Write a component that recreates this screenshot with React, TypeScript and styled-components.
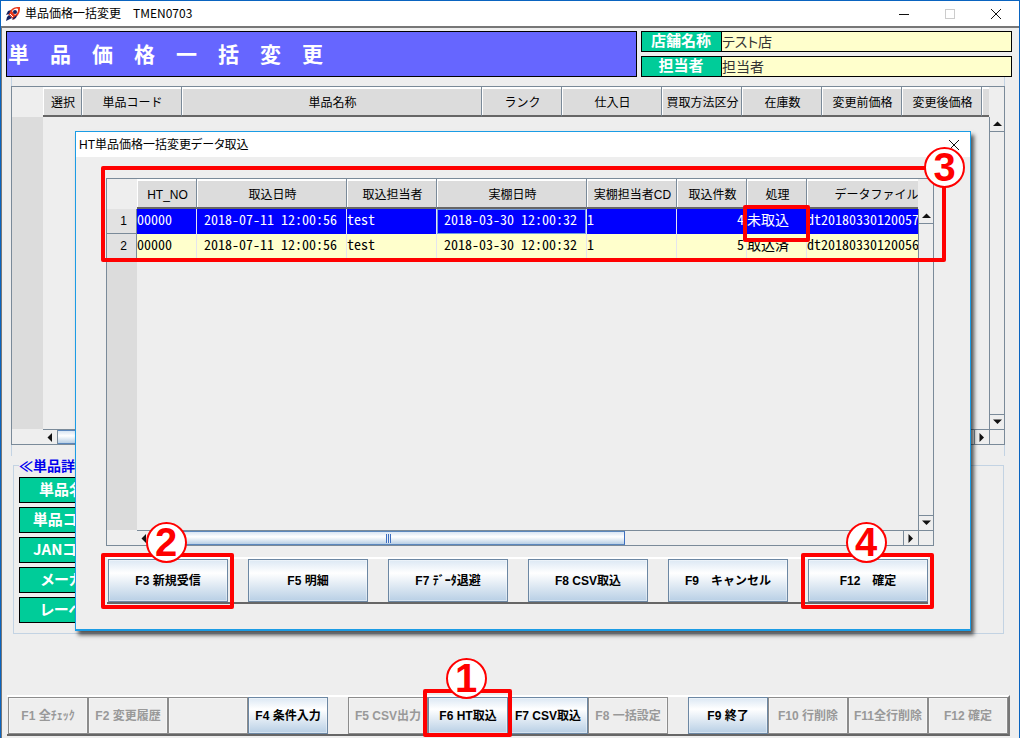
import React from 'react';
import styled, { createGlobalStyle, css } from 'styled-components';

const ui = '"Liberation Sans", "Noto Sans CJK JP", sans-serif';
const cjk = '"Noto Sans CJK JP", "Liberation Sans", sans-serif';
const mono = '"Noto Sans Mono CJK JP", "Liberation Mono", "Noto Sans CJK JP", monospace';

const line = '#7a8a99';
const panel = '#eeeeee';
const headerFill = '#dcdcdc';
const green = '#00cc99';
const cream = '#ffffcc';

const GlobalStyle = createGlobalStyle`
  *, *::before, *::after { box-sizing: border-box; }
  body { margin: 0; background: ${panel}; font-family: ${ui}; font-size: 12px; color: #000; }
  button, input { font: inherit; color: inherit; margin: 0; padding: 0; border-radius: 0; }
`;

const Window = styled.div`
  position: relative;
  display: flex;
  flex-direction: column;
  min-height: 100vh;
  border: 1px solid #0a64c0;
  background: ${panel};
`;

const TitleBar = styled.header`
  display: flex;
  align-items: center;
  height: 25px;
  padding-left: 4px;
  background: #fff;
  font-family: ${cjk};
`;

const WindowTitle = styled.h1`
  flex: 1;
  margin: 0 0 2px 4px;
  font-size: 12px;
  font-weight: 400;
  line-height: 20px;
`;

const CaptionButton = styled.button`
  display: flex;
  align-items: center;
  justify-content: center;
  width: 46px;
  height: 24px;
  border: 0;
  background: transparent;
`;

const Client = styled.main`
  flex: 1;
  display: flex;
  flex-direction: column;
  padding: 3px 7px 2px 3px;
  border-top: 2px solid #777;
  border-left: 1px solid #777;
`;

const TopRow = styled.div`
  display: grid;
  grid-template-columns: 631fr 371fr;
  gap: 4px;
  margin-left: 1px;
`;

const Banner = styled.h2`
  margin: 0;
  padding-left: 1px;
  border: 1px solid #000;
  background: #6666ff;
  color: #fff;
  font-family: ${cjk};
  font-size: 21px;
  font-weight: 700;
  line-height: 42px;
`;

const InfoList = styled.div`
  display: grid;
  gap: 4px;
`;

const InfoRow = styled.label`
  display: flex;
  height: 21px;
  border: 1px solid #000;
  background: ${cream};
`;

const InfoName = styled.span`
  flex: none;
  width: 80px;
  padding-right: 1px;
  border-right: 1px solid #000;
  background: ${green};
  color: #fff;
  font-family: ${cjk};
  font-size: 15px;
  font-weight: 700;
  line-height: 16px;
  text-align: center;
`;

const InfoValue = styled.input`
  flex: 1;
  min-width: 0;
  padding-bottom: 2px;
  border: 0;
  background: transparent;
  color: #333;
  font-family: ${cjk};
  font-size: 14px;
  font-feature-settings: "palt";
`;

const ListArea = styled.section`
  flex: 1;
  display: flex;
  min-height: 379px;
  margin: 0 7px 0 6px;
  padding: 9px 0 11px;
  border: 1px solid #c3d3e3;
  border-width: 0 1px;
`;

const Pane = styled.div<{ $minHeight?: number }>`
  position: relative;
  flex: 1;
  display: grid;
  grid-template-columns: minmax(0, 1fr) 15px;
  grid-template-rows: minmax(0, 1fr) 15px;
  min-height: ${(p) => p.$minHeight ?? 0}px;
  margin: 0 -1px;
  border: 1px solid ${line};
`;

const Viewport = styled.div<{ $gutter: number }>`
  overflow: hidden;
  background: linear-gradient(to right, ${headerFill} ${(p) => p.$gutter}px, ${panel} ${(p) => p.$gutter}px);
`;

const Table = styled.table`
  width: 0;
  table-layout: fixed;
  border-collapse: separate;
  border-spacing: 0;
`;

const HeadCell = styled.th`
  height: 30px;
  padding: 3px 0 0 2px;
  overflow: hidden;
  border: solid ${line};
  border-width: 0 1px 0 0;
  border-bottom: 2px solid #666;
  background: ${headerFill};
  box-shadow: inset 1px 2px 0 #fff;
  font-weight: 400;
  line-height: 24px;
  text-align: center;
  white-space: nowrap;
`;

const CornerCell = styled.td`
  padding: 0;
  background: ${panel};
`;

const RowHead = styled.th`
  height: 25px;
  padding: 0 0 0 4px;
  border-right: 1px solid ${line};
  border-bottom: 1px solid ${line};
  background: #e2e2e2;
  font-weight: 400;
  text-align: center;
`;

const Row = styled.tr<{ $selected: boolean }>`
  background: ${(p) => (p.$selected ? '#0000ff' : cream)};
  color: ${(p) => (p.$selected ? '#fff' : '#000')};
  ${RowHead} { color: #000; }
`;

const Cell = styled.td<{ $align: 'left' | 'center' | 'right'; $focused: boolean }>`
  position: relative;
  height: 25px;
  padding: 0 2px 5px 0;
  border-right: 1px solid #e4e4ee;
  font-family: ${mono};
  font-size: 14px;
  line-height: 20px;
  text-align: ${(p) => p.$align};
  white-space: nowrap;
  ${(p) => p.$focused && css`box-shadow: inset 0 0 0 1px #6f9be0;`}
`;

const VBar = styled.div<{ $top: number }>`
  display: flex;
  flex-direction: column;
  margin-top: ${(p) => p.$top}px;
  border-left: 1px solid ${line};
`;

const HBar = styled.div<{ $gutter: number }>`
  display: flex;
  margin-left: ${(p) => p.$gutter}px;
  border-top: 1px solid ${line};
`;

const Track = styled.div`
  flex: 1;
  min-width: 0;
  border: 0 solid ${line};
  ${VBar} & { border-width: 1px 0; }
  ${HBar} & { border-width: 0 1px; }
`;

const Thumb = styled.div`
  display: flex;
  align-items: center;
  justify-content: center;
  height: 14px;
  border: 1px solid #5b87bd;
  border-left-width: 0;
  border-right-color: #3c6ec0;
  background: linear-gradient(#d8e5f3, #ffffff 40%, #b8cfe5);
`;

const Grip = styled.span`
  width: 5px;
  height: 9px;
  background: repeating-linear-gradient(to right, #3c6ec0 0 1px, #e6eef8 1px 2px);
`;

const ArrowButton = styled.button`
  flex: none;
  display: flex;
  align-items: center;
  justify-content: center;
  width: 14px;
  height: 14px;
  border: 0;
  background: ${panel};
`;

const BarCorner = styled.div`
  border: solid ${line};
  border-width: 1px 0 0 1px;
`;

const Details = styled.fieldset`
  min-width: 0;
  margin: 1px 8px 0 8px;
  padding: 4px 5px 10px;
  border: 1px solid #c3d3e3;
`;

const DetailsTitle = styled.legend`
  padding: 0;
  color: #0000ee;
  font-family: ${cjk};
  font-size: 14px;
  font-weight: 700;
  line-height: 16px;
`;

const DetailNames = styled.div`
  display: grid;
  gap: 4px;
  justify-items: start;
`;

const DetailName = styled.span`
  width: 100px;
  height: 26px;
  border: 1px solid #000;
  background: ${green};
  color: #fff;
  font-family: ${cjk};
  font-size: 15px;
  font-weight: 700;
  font-feature-settings: "palt";
  line-height: 22px;
  text-align: center;
`;

const FunctionBar = styled.footer`
  display: grid;
  grid-template-columns: repeat(4, 80fr) 20fr repeat(4, 80fr) 20fr repeat(4, 80fr);
  margin: 61px 2px 0 2px;
  padding-left: 1px;
  border: 2px solid #fff;
  border-left-width: 0;
  border-right: 2px solid #777;
  border-bottom: 2px solid #666;
`;

const Slot = styled.div`
  position: relative;
  display: grid;
`;

const KeyButton = styled.button<{ $height: number }>`
  height: ${(p) => p.$height}px;
  border: 1px solid #6c87a3;
  background: linear-gradient(#dce8f4, #ffffff 32%, #b8cfe5);
  box-shadow: inset 0 0 0 1px rgba(255, 255, 255, 0.4);
  font-weight: 700;
  line-height: 16px;
  white-space: nowrap;

  &:disabled {
    border-color: #8c8c8c;
    background: ${panel};
    color: #999;
  }
`;

const Dialog = styled.div`
  position: absolute;
  z-index: 2;
  top: 130px;
  left: 74px;
  right: 48px;
  display: flex;
  flex-direction: column;
  border: 1px solid #1b9ce5;
  border-bottom-width: 2px;
  background: ${panel};
  box-shadow: 3px 4px 4px rgba(0, 0, 0, 0.65);
`;

const DialogBar = styled.div`
  display: flex;
  align-items: center;
  height: 25px;
  padding-left: 3px;
  background: #fff;
`;

const DialogTitle = styled.h2`
  flex: 1;
  margin: 0 0 2px;
  font-size: 12px;
  font-weight: 400;
  font-feature-settings: "palt";
`;

const DialogClose = styled(CaptionButton)`
  width: 32px;
`;

const DialogBody = styled.div`
  display: flex;
  flex-direction: column;
  padding: 21px 37px 25px 31px;
`;

const DialogKeys = styled.div`
  display: grid;
  grid-template-columns: repeat(6, 1fr);
  gap: 20px;
  margin: 11px 5px 0 0;
  padding-left: 1px;
  border-top: 2px solid #fff;
  border-bottom: 2px solid #666;
`;

type Box = { top: number; left: number; right: number; bottom: number };

const Frame = styled.div<{ $box: Box }>`
  position: absolute;
  z-index: 3;
  top: ${(p) => p.$box.top}px;
  left: ${(p) => p.$box.left}px;
  right: ${(p) => p.$box.right}px;
  bottom: ${(p) => p.$box.bottom}px;
  border: 4px solid #ff0000;
  border-radius: 2px;
  pointer-events: none;
`;

const StepNumber = styled.span<{ $corner?: boolean }>`
  position: absolute;
  top: ${(p) => (p.$corner ? -23 : -35)}px;
  ${(p) => (p.$corner ? 'right: -23px;' : 'left: calc(50% - 22px);')}
  width: 41px;
  height: 41px;
  border: 2px solid #ff0000;
  border-radius: 50%;
  background: #fff;
  color: #ff0000;
  font-size: 40px;
  font-weight: 700;
  line-height: 37px;
  text-align: center;
`;

const arrows = {
  up: 'M0 5 L4.5 0.5 L9 5Z',
  down: 'M0 0.5 L9 0.5 L4.5 5Z',
  left: 'M5 0 L0.5 4.5 L5 9Z',
  right: 'M0.5 0 L5 4.5 L0.5 9Z',
};

function Arrow({ dir }: { dir: keyof typeof arrows }) {
  const tall = dir === 'left' || dir === 'right';
  return (
    <ArrowButton type="button" aria-label={`scroll ${dir}`}>
      <svg width={tall ? 6 : 9} height={tall ? 9 : 6} aria-hidden="true">
        <path d={arrows[dir]} fill="#111" />
      </svg>
    </ArrowButton>
  );
}

function Close() {
  return (
    <svg width="12" height="12" viewBox="0 0 12 12" aria-hidden="true">
      <path d="M1 1 L11 11 M11 1 L1 11" stroke="#111" fill="none" />
    </svg>
  );
}

function Logo() {
  return (
    <svg width="16" height="16" viewBox="0 0 16 16" aria-hidden="true">
      <path d="M5 5 C8 1 11 1 15 1 C15 5 15 8 10 12 L9 14 L7 12 L5 10 L3 8Z" fill="#e8391c" />
      <path d="M7 5 C9 3 11 2 13 3 C13 5 13 7 10 9Z" fill="#fff" />
      <circle cx="10" cy="6" r="2" fill="#15205e" />
      <path d="M1 9 L3 5 L6 4 L4 8Z M7 14 L11 12 L12 9 L8 12Z" fill="#15205e" />
      <path d="M4 9 L7 12 L5 13 L1 15 L2 11Z" fill="#15205e" />
      <path d="M5 8 L8 11" stroke="#fff" fill="none" />
    </svg>
  );
}

type PaneProps = {
  gutter: number;
  thumb: number;
  grip?: boolean;
  minHeight?: number;
  children: React.ReactNode;
  overlay?: React.ReactNode;
};

function ScrollPane({ gutter, thumb, grip, minHeight, children, overlay }: PaneProps) {
  return (
    <Pane $minHeight={minHeight}>
      <Viewport $gutter={gutter}>{children}</Viewport>
      <VBar $top={30}>
        <Arrow dir="up" />
        <Track />
        <Arrow dir="down" />
      </VBar>
      <HBar $gutter={gutter}>
        <Arrow dir="left" />
        <Track>
          <Thumb style={{ width: `${thumb}%` }}>{grip && <Grip />}</Thumb>
        </Track>
        <Arrow dir="right" />
      </HBar>
      <BarCorner />
      {overlay}
    </Pane>
  );
}

type Column = { name: string; width: number; align?: 'left' | 'center' | 'right' };

const itemColumns: Column[] = [
  { name: '選択', width: 39 },
  { name: '単品コード', width: 100 },
  { name: '単品名称', width: 300 },
  { name: 'ランク', width: 80 },
  { name: '仕入日', width: 100 },
  { name: '買取方法区分', width: 80 },
  { name: '在庫数', width: 80 },
  { name: '変更前価格', width: 80 },
  { name: '変更後価格', width: 80 },
  { name: '', width: 80 },
];

const importColumns: Column[] = [
  { name: 'HT_NO', width: 60 },
  { name: '取込日時', width: 150, align: 'center' },
  { name: '取込担当者', width: 90 },
  { name: '実棚日時', width: 150, align: 'center' },
  { name: '実棚担当者CD', width: 90 },
  { name: '取込件数', width: 70, align: 'right' },
  { name: '処理', width: 60 },
  { name: 'データファイル名', width: 150 },
];

const importRows = [
  ['00000', '2018-07-11 12:00:56', 'test', '2018-03-30 12:00:32', '1', '4', '未取込', 'dt20180330120057'],
  ['00000', '2018-07-11 12:00:56', 'test', '2018-03-30 12:00:32', '1', '5', '取込済', 'dt20180330120056'],
];

function Head({ columns, gutter }: { columns: Column[]; gutter: number }) {
  return (
    <>
      <colgroup>
        <col style={{ width: gutter }} />
        {columns.map((c, i) => (
          <col key={i} style={{ width: c.width }} />
        ))}
      </colgroup>
      <thead>
        <tr>
          <CornerCell />
          {columns.map((c, i) => (
            <HeadCell key={i} scope="col">{c.name}</HeadCell>
          ))}
        </tr>
      </thead>
    </>
  );
}

type Key = { label: string; enabled?: boolean; step?: number } | null;

const mainKeys: Key[] = [
  { label: 'F1 全ﾁｪｯｸ' },
  { label: 'F2 変更履歴' },
  { label: '' },
  { label: 'F4 条件入力', enabled: true },
  null,
  { label: 'F5 CSV出力' },
  { label: 'F6 HT取込', enabled: true, step: 1 },
  { label: 'F7 CSV取込', enabled: true },
  { label: 'F8 一括設定' },
  null,
  { label: 'F9 終了', enabled: true },
  { label: 'F10 行削除' },
  { label: 'F11全行削除' },
  { label: 'F12 確定' },
];

const dialogKeys = [
  { label: 'F3 新規受信', step: 2 },
  { label: 'F5 明細' },
  { label: 'F7 ﾃﾞｰﾀ退避' },
  { label: 'F8 CSV取込' },
  { label: 'F9　キャンセル' },
  { label: 'F12　確定', step: 4 },
];

const detailNames = ['単品名称', '単品コード', 'JANコード', 'メーカー', 'レーベル'];

function ImportDialog() {
  return (
    <Dialog role="dialog" aria-labelledby="import-title">
      <DialogBar>
        <DialogTitle id="import-title">HT単品価格一括変更データ取込</DialogTitle>
        <DialogClose type="button" aria-label="閉じる"><Close /></DialogClose>
      </DialogBar>
      <DialogBody>
        <ScrollPane
          gutter={30}
          thumb={63}
          grip
          minHeight={368}
          overlay={
            <Frame $box={{ top: -13, left: -6, right: -13, bottom: 283 }}>
              <StepNumber $corner>3</StepNumber>
            </Frame>
          }
        >
          <Table>
            <Head columns={importColumns} gutter={30} />
            <tbody>
              {importRows.map((row, r) => (
                <Row key={r} $selected={r === 0}>
                  <RowHead scope="row">{r + 1}</RowHead>
                  {row.map((value, c) => (
                    <Cell key={c} $align={importColumns[c].align ?? 'left'} $focused={r === 0 && c === 3}>
                      {value}
                      {r === 0 && c === 6 && <Frame $box={{ top: -4, left: -4, right: -4, bottom: -8 }} />}
                    </Cell>
                  ))}
                </Row>
              ))}
            </tbody>
          </Table>
        </ScrollPane>
        <DialogKeys>
          {dialogKeys.map((k) => (
            <Slot key={k.label}>
              <KeyButton type="button" $height={43}>{k.label}</KeyButton>
              {k.step && (
                <Frame $box={{ top: -6, left: -7, right: -6, bottom: -7 }}>
                  <StepNumber>{k.step}</StepNumber>
                </Frame>
              )}
            </Slot>
          ))}
        </DialogKeys>
      </DialogBody>
    </Dialog>
  );
}

export default function App() {
  return (
    <>
      <GlobalStyle />
      <Window>
        <TitleBar>
          <Logo />
          <WindowTitle>単品価格一括変更　TMEN0703</WindowTitle>
          <CaptionButton type="button" aria-label="最小化">
            <svg width="10" height="10" aria-hidden="true"><path d="M0 5.5H10" stroke="#111" /></svg>
          </CaptionButton>
          <CaptionButton type="button" aria-label="最大化" disabled>
            <svg width="10" height="10" aria-hidden="true">
              <rect x="0.5" y="0.5" width="9" height="9" fill="none" stroke="#ccc" />
            </svg>
          </CaptionButton>
          <CaptionButton type="button" aria-label="閉じる"><Close /></CaptionButton>
        </TitleBar>
        <Client>
          <TopRow>
            <Banner>単　品　価　格　一　括　変　更</Banner>
            <InfoList>
              <InfoRow>
                <InfoName>店舗名称</InfoName>
                <InfoValue readOnly value="テスト店" />
              </InfoRow>
              <InfoRow>
                <InfoName>担当者</InfoName>
                <InfoValue readOnly value="担当者" />
              </InfoRow>
            </InfoList>
          </TopRow>
          <ListArea>
            <ScrollPane gutter={31} thumb={40}>
              <Table>
                <Head columns={itemColumns} gutter={31} />
              </Table>
            </ScrollPane>
          </ListArea>
          <Details>
            <DetailsTitle>≪単品詳細≫</DetailsTitle>
            <DetailNames>
              {detailNames.map((n) => (
                <DetailName key={n}>{n}</DetailName>
              ))}
            </DetailNames>
          </Details>
          <FunctionBar>
            {mainKeys.map((k, i) =>
              k ? (
                <Slot key={i}>
                  <KeyButton type="button" $height={37} disabled={!k.enabled}>{k.label}</KeyButton>
                  {k.step && (
                    <Frame $box={{ top: -8, left: -5, right: -4, bottom: -3 }}>
                      <StepNumber>{k.step}</StepNumber>
                    </Frame>
                  )}
                </Slot>
              ) : (
                <Slot key={i} />
              )
            )}
          </FunctionBar>
        </Client>
        <ImportDialog />
      </Window>
    </>
  );
}
